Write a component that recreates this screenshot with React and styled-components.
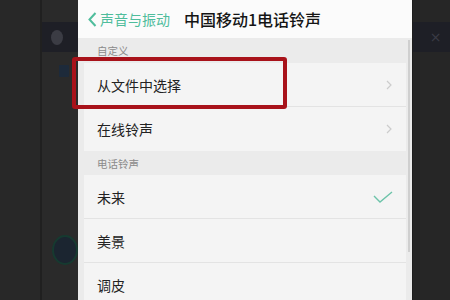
import React from "react";
import styled, { createGlobalStyle } from "styled-components";

const Global = createGlobalStyle`
  html, body { margin: 0; padding: 0; background: #272727; }
  body { width: 450px; height: 300px; overflow: hidden; font-family: "Noto Sans CJK SC", "Noto Sans", sans-serif; }
`;

const Stage = styled.div`
  display: flex;
  width: 450px;
  height: 300px;
  background: #272727;
  overflow: hidden;
`;

const LeftPane = styled.div`
  display: flex;
  width: 78px;
  flex-shrink: 0;
`;

const Gutter = styled.div`
  width: 40px;
  background: #282828;
`;

const BackColumn = styled.div`
  flex: 1;
  display: flex;
  flex-direction: column;
  border-left: 2px solid #202020;
  background: #2a2a2a;
`;

const NavyBar = styled.div`
  margin-top: 22px;
  height: 30px;
  flex-shrink: 0;
  background: #1e1f26;
  display: flex;
  align-items: center;
  justify-content: ${(p) => p.$justify || "flex-start"};
  padding: ${(p) => p.$pad || "0"};
`;

const Avatar = styled.div`
  width: 12px;
  height: 15px;
  border-radius: 50%;
  background: #3b3c44;
  margin-left: 9px;
`;

const SmallIcon = styled.div`
  margin: 13px 0 0 17px;
  width: 10px;
  height: 12px;
  flex-shrink: 0;
  background: #1d2a3a;
  border-radius: 1px;
`;

const MicBadge = styled.div`
  margin: 158px 0 0 10px;
  width: 22px;
  height: 26px;
  flex-shrink: 0;
  border-radius: 50%;
  background: #1b2530;
  border: 2px solid #163a30;
`;

const Phone = styled.div`
  position: relative;
  width: 334px;
  flex-shrink: 0;
  background: #ebebeb;
  display: flex;
  flex-direction: column;
`;

const Header = styled.div`
  height: 38px;
  flex-shrink: 0;
  background: #fbfbfb;
  display: flex;
  align-items: center;
  padding-left: 10px;
  gap: 14px;
`;

const Back = styled.div`
  display: flex;
  align-items: center;
  gap: 3px;
  color: #4fbd9c;
  font-size: 14px;
`;

const Title = styled.div`
  color: #151515;
  font-size: 16px;
  font-weight: 500;
`;

const Body = styled.div`
  flex: 1;
  min-height: 0;
  display: flex;
  padding-right: 6px;
  position: relative;
  overflow: hidden;
`;

const List = styled.div`
  flex: 1;
  display: flex;
  flex-direction: column;
`;

const SectionLabel = styled.div`
  height: ${(p) => p.$h}px;
  flex-shrink: 0;
  display: flex;
  align-items: center;
  padding-left: 19px;
  font-size: 10.5px;
  color: #8a8a8a;
`;

const Row = styled.div`
  height: 44px;
  flex-shrink: 0;
  box-sizing: border-box;
  margin-left: 6px;
  background: #f4f4f4;
  display: flex;
  align-items: center;
  justify-content: space-between;
  padding: 0 14px 0 13px;
  font-size: 14px;
  color: #222;
  border-bottom: ${(p) => (p.$divider ? "1px solid #e3e3e3" : "none")};
`;

const ScrollTrack = styled.div`
  position: absolute;
  right: 2px;
  top: 2px;
  width: 2px;
  height: 212px;
  background: #cfcfcf;
`;

const Highlight = styled.div`
  position: absolute;
  left: -6px;
  top: 57px;
  width: 215px;
  height: 52px;
  box-sizing: border-box;
  border: 4px solid #a8121a;
  border-radius: 3px;
  pointer-events: none;
`;

const RightPane = styled.div`
  flex: 1;
  display: flex;
  flex-direction: column;
  background: #262626;
  border-left: 1px solid #1e1e1e;
`;

const Close = styled.span`
  color: #3a3b45;
  font-size: 14px;
  font-family: "DejaVu Sans", sans-serif;
`;

const Chevron = () => (
  <svg width="6" height="10" viewBox="0 0 6 10">
    <path d="M1 1 L5 5 L1 9" fill="none" stroke="#cccccc" strokeWidth="1.2" />
  </svg>
);

const Check = () => (
  <svg width="20" height="12" viewBox="0 0 20 12" style={{ marginRight: -1 }}>
    <path d="M1 5 L7 11 L19 1" fill="none" stroke="#6cc3a9" strokeWidth="1.4" />
  </svg>
);

const BackArrow = () => (
  <svg width="9" height="15" viewBox="0 0 9 15">
    <path d="M7.5 1 L1.5 7.5 L7.5 14" fill="none" stroke="#4fbd9c" strokeWidth="2" />
  </svg>
);

export default function App() {
  return (
    <>
      <Global />
      <Stage>
        <LeftPane>
          <Gutter />
          <BackColumn>
            <NavyBar>
              <Avatar />
            </NavyBar>
            <SmallIcon />
            <MicBadge />
          </BackColumn>
        </LeftPane>
        <Phone>
          <Header>
            <Back>
              <BackArrow />
              声音与振动
            </Back>
            <Title>中国移动1电话铃声</Title>
          </Header>
          <Body>
            <List>
              <SectionLabel $h={25}>自定义</SectionLabel>
              <Row $divider>
                从文件中选择
                <Chevron />
              </Row>
              <Row>
                在线铃声
                <Chevron />
              </Row>
              <SectionLabel $h={24}>电话铃声</SectionLabel>
              <Row $divider>
                未来
                <Check />
              </Row>
              <Row $divider>美景</Row>
              <Row>调皮</Row>
            </List>
            <ScrollTrack />
          </Body>
          <Highlight />
        </Phone>
        <RightPane>
          <NavyBar $justify="center" $pad="0 0 0 8px">
            <Close>×</Close>
          </NavyBar>
        </RightPane>
      </Stage>
    </>
  );
}
